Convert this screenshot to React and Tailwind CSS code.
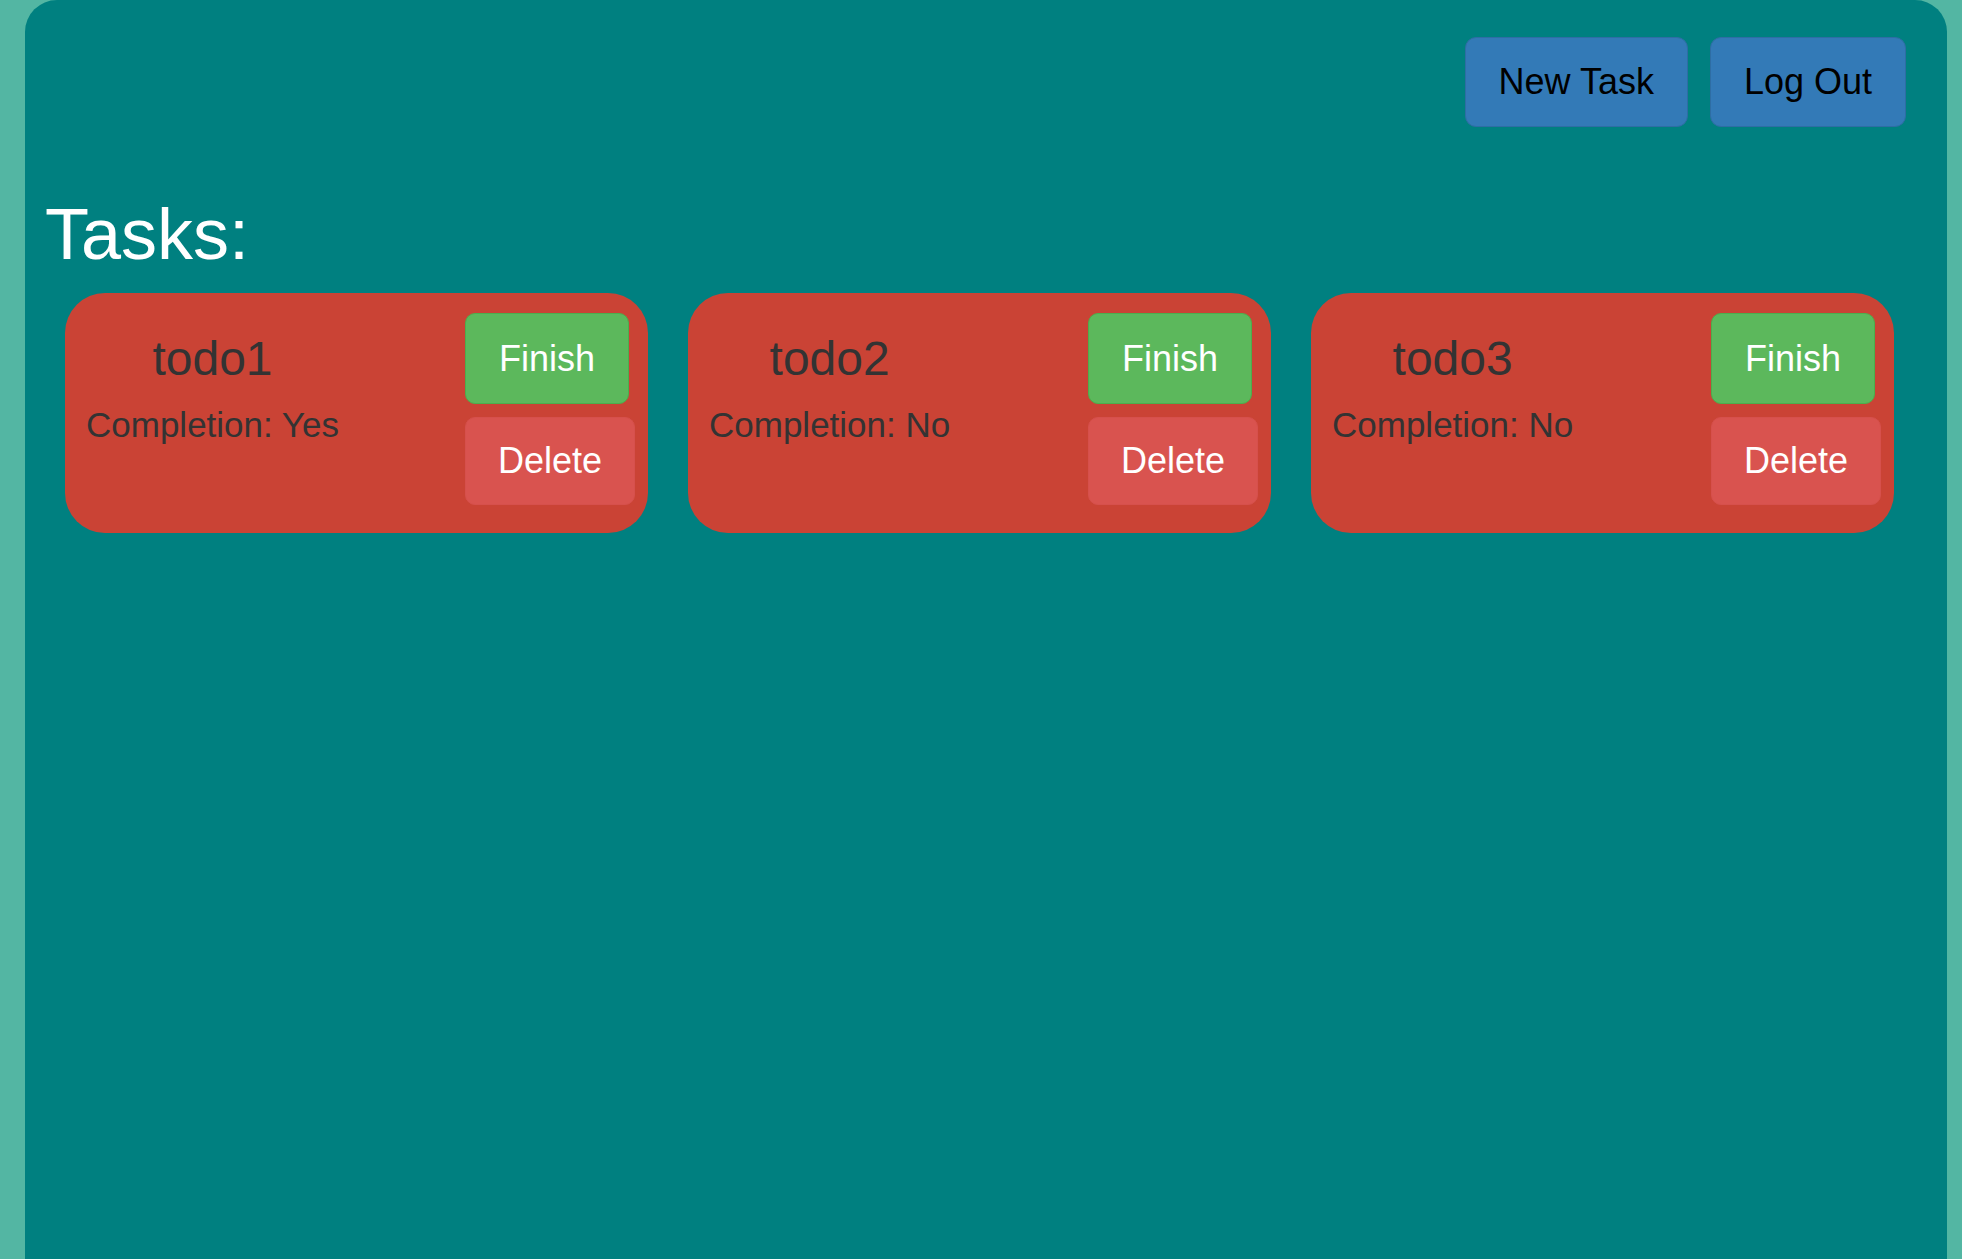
const TASKS = [
  { id: 1, name: "todo1", done: true },
  { id: 2, name: "todo2", done: false },
  { id: 3, name: "todo3", done: false },
];

function TaskCard({ task }) {
  return (
    <div className="w-[583px] h-[240px] rounded-[40px] bg-[#ca4335] flex justify-between">
      {/* nombre + estado */}
      <div className="pl-[21px] pt-[42px] text-center text-[#333333]">
        <p className="text-[48px] leading-none">{task.name}</p>
        <p className="text-[35px] leading-none mt-[24px]">
          Completion: {task.done ? "Yes" : "No"}
        </p>
      </div>

      <div className="pt-[20px] mr-[13px] flex flex-col items-start gap-[13px]">
        <button className="h-[91px] px-[33px] text-[36px] leading-none text-white bg-[#5cb85c] border border-[#4cae4c] rounded-[10px]">
          Finish
        </button>
        <button className="h-[88px] px-8 text-[36px] leading-none text-white bg-[#d9534f] border border-[#d6504c] rounded-[10px]">
          Delete
        </button>
      </div>
    </div>
  );
}

export default function App() {
  return (
    <div className="min-h-screen bg-[#53b6a3] pl-[25px] pr-[15px] font-['Liberation_Sans',Arial,sans-serif]">
      <div className="min-h-[1259px] bg-[#008080] rounded-t-[32px]">
        {/* Barra superior */}
        <div className="flex justify-end gap-[22px] pt-[37px] pr-[41px]">
          <button className="h-[90px] px-[33px] text-[36px] leading-none text-black bg-[#337ab7] border border-[#2e6da4] rounded-[11px]">
            New Task
          </button>
          <button className="h-[90px] px-[33px] text-[36px] leading-none text-black bg-[#337ab7] border border-[#2e6da4] rounded-[11px]">
            Log Out
          </button>
        </div>

        <h1 className="mt-[71px] pl-[20px] text-[72px] leading-none text-white">Tasks:</h1>

        <div className="mt-[23px] ml-[40px] flex gap-[40px]">
          {TASKS.map((t) => (
            <TaskCard key={t.id} task={t} />
          ))}
        </div>
      </div>
    </div>
  );
}
